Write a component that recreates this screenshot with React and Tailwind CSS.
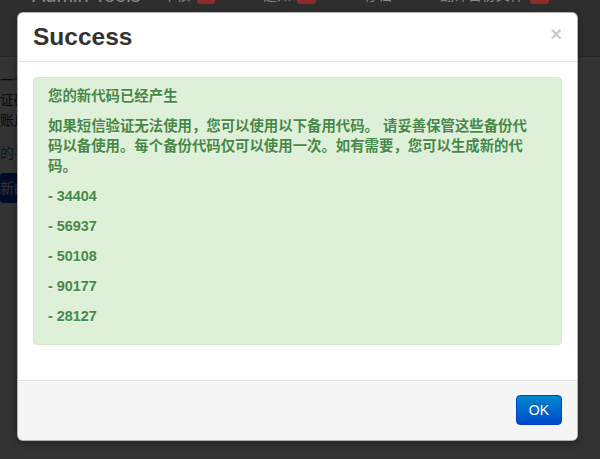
import React from 'react';

const font = { fontFamily: '"Liberation Sans", Arial, "Noto Sans CJK SC", sans-serif' };

const codes = ['34404', '56937', '50108', '90177', '28127'];

const NavLink = ({ label, badge }) => (
    <div className="flex items-center gap-[6px]">
        <span>{label}</span>
        {badge && (
            <span className="rounded-[3px] bg-[#8e2b29] px-[6px] text-[12px] leading-[18px] font-bold text-[#ddd]">
                {badge}
            </span>
        )}
    </div>
);

const PageContent = () => (
    <div className="h-full bg-white pt-[70px] text-[14px] leading-[20px] text-[#333]">
        <div className="mb-[13px] whitespace-nowrap">
            <div>一个验证码将会发送到您的手机。</div>
            <div>证码输入后即可完成两步验证设置。</div>
            <div>账户安全将得到更好的保护。</div>
        </div>
        <div className="mb-[10px] whitespace-nowrap text-[#0088cc]">的手机号码已经验证</div>
        <button className="h-[30px] whitespace-nowrap rounded-[4px] bg-[#0044cc] text-white">
            新的备用代码
        </button>
    </div>
);

export default function App() {
    return (
        <div className="relative h-[459px] w-[600px] overflow-hidden" style={font}>
            <PageContent />

            {/* Backdrop */}
            <div className="absolute inset-0 bg-black/80"></div>

            {/* Fixed navbar, cut off at the top */}
            <div className="absolute inset-x-0 top-0 h-[57px] overflow-hidden border-b border-[#262626] bg-[#2e2e2e] text-[14px] text-[#8a8a8a]">
                <div className="-mt-[20px] flex items-center pl-[32px]">
                    <span className="mr-[22px] text-[20px] leading-[30px]">Admin Tools</span>
                    <div className="flex gap-[48px]">
                        <NavLink label="审核" badge="3" />
                        <NavLink label="通知" badge="2" />
                        <NavLink label="存档" />
                        <NavLink label="翻译备份文件" badge="1" />
                    </div>
                </div>
            </div>

            {/* Modal */}
            <div className="absolute left-[17px] top-[12px] w-[561px] overflow-hidden rounded-[6px] border border-black/30 bg-white shadow-[0_3px_7px_rgba(0,0,0,0.3)]">
                <div className="flex items-start justify-between border-b border-[#e5e5e5] px-[15px] py-[9px]">
                    <h3 className="text-[24.5px] leading-[30px] font-bold text-[#333]">Success</h3>
                    <button className="mt-[2px] text-[20px] leading-[20px] font-bold text-black opacity-20">×</button>
                </div>

                <div className="p-[15px]">
                    <div className="mb-[20px] rounded-[4px] border border-[#d6e9c6] bg-[#dff0d8] py-[8px] pl-[14px] pr-[28px] text-[14.4px] leading-[20px] font-bold text-[#468847] [text-shadow:0_1px_0_rgba(255,255,255,0.5)]">
                        <p className="mb-[10px]">您的新代码已经产生</p>
                        <p className="mb-[10px]">
                            如果短信验证无法使用，您可以使用以下备用代码。 请妥善保管这些备份代码以备使用。每个备份代码仅可以使用一次。如有需要，您可以生成新的代码。
                        </p>
                        {codes.map((code) => (
                            <p key={code} className="mb-[10px]">- {code}</p>
                        ))}
                    </div>
                </div>

                <div className="flex justify-end border-t border-[#ddd] bg-[#f5f5f5] px-[15px] pt-[14px] pb-[15px] shadow-[inset_0_1px_0_#fff]">
                    <button className="rounded-[4px] border border-[#0044cc] bg-linear-to-b from-[#0088cc] to-[#0044cc] px-[12px] py-[4px] text-[14px] leading-[20px] text-white [text-shadow:0_-1px_0_rgba(0,0,0,0.25)]">
                        OK
                    </button>
                </div>
            </div>
        </div>
    );
}
